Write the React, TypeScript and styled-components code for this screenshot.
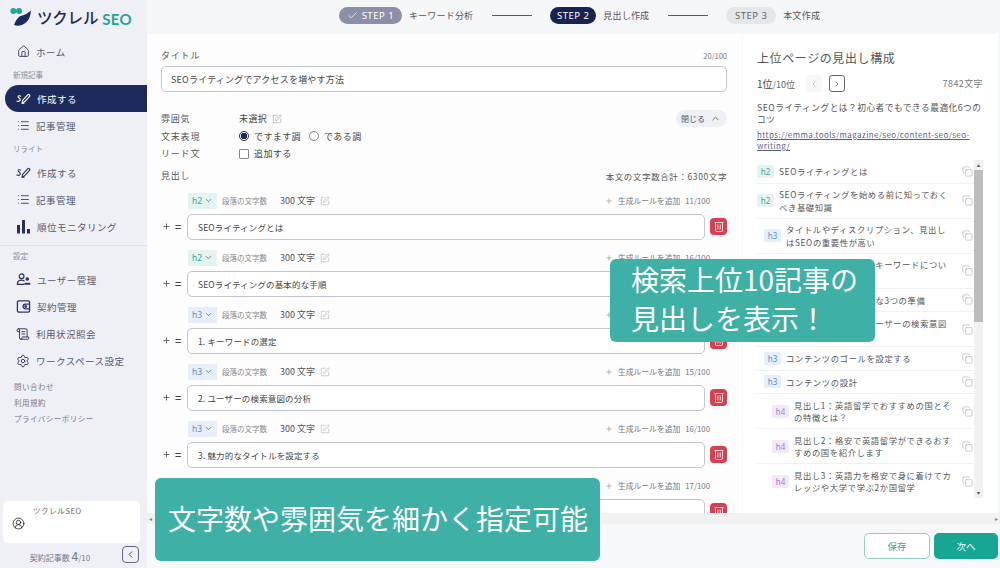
// Dependencies
import React from 'react'
import styled, { createGlobalStyle } from 'styled-components'
import {
  Check,
  ChevronDown,
  ChevronLeft,
  ChevronRight,
  ChevronUp,
  CircleUserRound,
  Copy,
  House,
  List,
  Plus,
  ScrollText,
  Settings,
  SquarePen,
} from 'lucide-react'

const jp = `"Noto Sans CJK JP", "Noto Sans", sans-serif`

// Icons
const PenSign = ({ light }: { light?: boolean }) => (
  <svg width="15" height="15" viewBox="0 0 16 16" fill="none" stroke={light ? '#fff' : '#2c3566'} strokeWidth="1.2" strokeLinecap="round" strokeLinejoin="round">
    <path d="M5 5.500c-1.500-1-3-.2-2.700.9.3 1 2.500 1.600 2.300 3-.2 1.300-2.300 2.200-3.600 1.400" />
    <path d="M6.500 13l.6-3 5.300-5.800c.6-.6 1.400-.6 1.900-.1s.5 1.300-.1 1.900l-5.300 5.800z" />
    <path d="M6.500 13h2" />
  </svg>
)

const Bars = () => (
  <svg width="15" height="15" viewBox="0 0 15 15" fill="#27305f">
    <rect x="1" y="6" width="3" height="8.500" />
    <rect x="6" y="1" width="3" height="13.500" />
    <rect x="11" y="10" width="3" height="4.500" />
  </svg>
)

const Users = () => (
  <svg width="15" height="15" viewBox="0 0 16 16" fill="none" stroke="#2c3566" strokeWidth="1.300" strokeLinecap="round">
    <circle cx="6" cy="4.500" r="2.500" />
    <path d="M1.500 13c0-2.800 2-4.300 4.500-4.300 1 0 1.900.2 2.600.7" />
    <path d="M1.500 13.300h7" />
    <circle cx="12" cy="7.500" r="1.300" fill="#2c3566" />
    <path d="M9.800 12.500h4.700" strokeWidth="2" />
  </svg>
)

const Wallet = () => (
  <svg width="15" height="15" viewBox="0 0 16 16" fill="none" stroke="#2c3566" strokeWidth="1.400">
    <rect x="1.500" y="2" width="13" height="12" rx="1.500" />
    <path d="M14.500 5.500H10a2.500 2.500 0 0 0 0 5h4.500" />
    <circle cx="10.300" cy="8" r=".8" />
  </svg>
)

const Trash = () => (
  <svg width="10" height="11" viewBox="0 0 10 11" fill="none" stroke="#fbdfe2" strokeWidth="1">
    <path d="M.5 1.500h9" />
    <rect x="1.500" y="1.500" width="7" height="9" rx=".8" />
    <path d="M3.800 3.500v5M6.200 3.500v5" />
  </svg>
)

const Logo = () => (
  <svg width="22" height="21" viewBox="0 0 22 21">
    <circle cx="3.300" cy="4" r="3" fill="#1fa795" />
    <circle cx="9" cy="4" r="3" fill="#1fa795" />
    <path d="M20.800 3.500C17 7.500 12 8.500 9.500 9.500 7.500 11 5.500 14 4 18c7 2.500 17-2.500 16.800-14.500z" fill="#1f2a5c" />
  </svg>
)

// Data
type Level = 'h2' | 'h3' | 'h4'

const headings: { level: Level; text: string; count: string }[] = [
  { level: 'h2', text: 'SEOライティングとは', count: '11/100' },
  { level: 'h2', text: 'SEOライティングの基本的な手順', count: '16/100' },
  { level: 'h3', text: '1. キーワードの選定', count: '10/100' },
  { level: 'h3', text: '2. ユーザーの検索意図の分析', count: '15/100' },
  { level: 'h3', text: '3. 魅力的なタイトルを設定する', count: '16/100' },
  { level: 'h3', text: '4. 見出し構成を作成する', count: '17/100' },
]

const outline: { level: Level; text: string }[] = [
  { level: 'h2', text: 'SEOライティングとは' },
  { level: 'h2', text: 'SEOライティングを始める前に知っておくべき基礎知識' },
  { level: 'h3', text: 'タイトルやディスクリプション、見出しはSEOの重要性が高い' },
  { level: 'h3', text: '今回ターゲットとするキーワードについて理解する' },
  { level: 'h3', text: '執筆を始める前に必要な3つの準備' },
  { level: 'h3', text: 'まずはキーワードとユーザーの検索意図を把握する' },
  { level: 'h3', text: 'コンテンツのゴールを設定する' },
  { level: 'h3', text: 'コンテンツの設計' },
  { level: 'h4', text: '見出し1：英語留学でおすすめの国とその特徴とは？' },
  { level: 'h4', text: '見出し2：格安で英語留学ができるおすすめの国を紹介します' },
  { level: 'h4', text: '見出し3：英語力を格安で身に着けてカレッジや大学で学ぶ2か国留学' },
]

// Page
export default function App() {
  return (
    <Page>
      <GlobalStyle />
      <Sidebar>
        <Brand>
          <Logo />
          <BrandName>ツクレル</BrandName>
          <BrandSeo>SEO</BrandSeo>
        </Brand>
        <NavItem><NavIcon><House size={13} strokeWidth={1.6} /></NavIcon>ホーム</NavItem>
        <NavLabel>新規記事</NavLabel>
        <NavItem $active><NavIcon><PenSign light /></NavIcon>作成する</NavItem>
        <NavItem><NavIcon><List size={13} strokeWidth={1.6} /></NavIcon>記事管理</NavItem>
        <NavLabel>リライト</NavLabel>
        <NavItem><NavIcon><PenSign /></NavIcon>作成する</NavItem>
        <NavItem><NavIcon><List size={13} strokeWidth={1.6} /></NavIcon>記事管理</NavItem>
        <NavItem><NavIcon><Bars /></NavIcon>順位モニタリング</NavItem>
        <NavRule />
        <NavLabel>設定</NavLabel>
        <NavItem><NavIcon><Users /></NavIcon>ユーザー管理</NavItem>
        <NavItem><NavIcon><Wallet /></NavIcon>契約管理</NavItem>
        <NavItem><NavIcon><ScrollText size={14} strokeWidth={1.6} /></NavIcon>利用状況照会</NavItem>
        <NavItem><NavIcon><Settings size={14} strokeWidth={1.6} /></NavIcon>ワークスペース設定</NavItem>
        <SmallLinks>
          <a>問い合わせ</a>
          <a>利用規約</a>
          <a>プライバシーポリシー</a>
        </SmallLinks>
        <Account>
          <CircleUserRound size={13} strokeWidth={1.5} color="#222" />
          <span>ツクレルSEO</span>
        </Account>
        <Quota>
          <span>契約記事数 <b>4</b>/10</span>
          <Collapse><ChevronLeft size={11} strokeWidth={2} /></Collapse>
        </Quota>
      </Sidebar>

      <Main>
        <Stepper>
          <StepPill $state="done"><Check size={11} strokeWidth={1.6} />STEP 1</StepPill>
          <StepName>キーワード分析</StepName>
          <StepLine />
          <StepPill $state="current">STEP 2</StepPill>
          <StepName>見出し作成</StepName>
          <StepLine />
          <StepPill $state="todo">STEP 3</StepPill>
          <StepName>本文作成</StepName>
        </Stepper>

        <Panels>
          <FormPanel>
            <SpreadRow>
              <FieldLabel>タイトル</FieldLabel>
              <Counter>20/100</Counter>
            </SpreadRow>
            <TitleInput>SEOライティングでアクセスを増やす方法</TitleInput>

            <Options>
              <OptionRow>
                <FieldLabel>雰囲気</FieldLabel>
                <OptionValue>未選択<SquarePen size={10} strokeWidth={1.2} color="#888" /></OptionValue>
                <CloseButton>閉じる<ChevronUp size={11} strokeWidth={1.8} /></CloseButton>
              </OptionRow>
              <OptionRow>
                <FieldLabel>文末表現</FieldLabel>
                <OptionValue>
                  <Radio $checked />ですます調
                  <Radio />である調
                </OptionValue>
              </OptionRow>
              <OptionRow>
                <FieldLabel>リード文</FieldLabel>
                <OptionValue><Box />追加する</OptionValue>
              </OptionRow>
            </Options>

            <HeadingBar>
              <FieldLabel>見出し</FieldLabel>
              <Total>本文の文字数合計：6300文字</Total>
            </HeadingBar>

            {headings.map((h, i) => (
              <HeadingItem key={i}>
                <HeadingMeta>
                  <LevelSelect $level={h.level}>{h.level}<ChevronDown size={9} strokeWidth={1.8} /></LevelSelect>
                  <MetaLabel>段落の文字数</MetaLabel>
                  <MetaValue>300 文字</MetaValue>
                  <SquarePen size={10} strokeWidth={1.2} color="#999" />
                  <RuleAdd><Plus size={8} strokeWidth={1.5} /><span>生成ルールを追加</span><span>{h.count}</span></RuleAdd>
                </HeadingMeta>
                <HeadingRow>
                  <Handles><Plus size={9} strokeWidth={2} /><b>=</b></Handles>
                  <HeadingInput>{h.text}</HeadingInput>
                  <TrashButton><Trash /></TrashButton>
                </HeadingRow>
              </HeadingItem>
            ))}
          </FormPanel>

          <SidePanel>
            <SideTitle>上位ページの見出し構成</SideTitle>
            <RankRow>
              <Rank>1位<small>/10位</small></Rank>
              <PageButton $disabled><ChevronLeft size={8} /></PageButton>
              <PageButton><ChevronRight size={8} /></PageButton>
              <CharCount>7842文字</CharCount>
            </RankRow>
            <ArticleTitle>SEOライティングとは？初心者でもできる最適化6つのコツ</ArticleTitle>
            <ArticleLink>https://emma.tools/magazine/seo/content-seo/seo-writing/</ArticleLink>
            <OutlineBox>
              <OutlineList>
                {outline.map((o, i) => (
                  <OutlineRow key={i} $level={o.level}>
                    <LevelTag $level={o.level}>{o.level}</LevelTag>
                    <OutlineText>{o.text}</OutlineText>
                    <Copy size={11} strokeWidth={1.1} color="#999" />
                  </OutlineRow>
                ))}
              </OutlineList>
              <OutlineScroll>
                <Arrow>▴</Arrow>
                <Thumb />
                <Arrow>▾</Arrow>
              </OutlineScroll>
            </OutlineBox>
          </SidePanel>
        </Panels>

        <HScroll>
          <span>◂</span>
          <span>▸</span>
        </HScroll>

        <Footer>
          <SaveButton>保存</SaveButton>
          <NextButton>次へ</NextButton>
        </Footer>
      </Main>

      <Callout $kind="top">検索上位10記事の<br />見出しを表示！</Callout>
      <Callout $kind="bottom">文字数や雰囲気を細かく指定可能</Callout>
    </Page>
  )
}

// Styled Components
const GlobalStyle = createGlobalStyle`
  html, body, #root {
    margin: 0;
    height: 100%;
  }

  body {
    overflow: hidden;
    font-family: ${jp};
    color: #444;
  }

  * {
    box-sizing: border-box;
  }
`

const Page = styled.div`
  position: relative;
  display: flex;
  width: 1000px;
  height: 568px;
  overflow: hidden;
  background: #f5f6f8;
`

const Sidebar = styled.aside`
  display: flex;
  flex: 0 0 147px;
  flex-direction: column;
  background: #eef0f6;
`

const Brand = styled.div`
  display: flex;
  align-items: center;
  height: 38px;
  padding: 0 0 4px 10px;
`

const BrandName = styled.span`
  margin-left: 5px;
  color: #1f2a5c;
  font-size: 15.500px;
  font-weight: 500;
  letter-spacing: -0.2px;
`

const BrandSeo = styled.span`
  margin: 3px 0 0 4px;
  color: #1fa795;
  font-family: Lato, sans-serif;
  font-size: 15px;
  font-weight: 700;
  letter-spacing: 0.4px;
`

const NavItem = styled.div<{ $active?: boolean }>`
  display: flex;
  align-items: center;
  height: 27px;
  margin-left: 5px;
  padding-left: 11px;
  border-radius: 14px 0 0 14px;
  background: ${(p) => (p.$active ? '#1d2a5b' : 'transparent')};
  color: ${(p) => (p.$active ? '#fff' : '#555a6e')};
  font-size: 9.500px;
  letter-spacing: 0.5px;
`

const NavIcon = styled.span`
  display: flex;
  flex: 0 0 14px;
  justify-content: center;
  margin-right: 6px;
  color: #2c3566;

  svg {
    flex: none;
  }
`

const NavLabel = styled.div`
  height: 13px;
  margin: 3px 0 4px 13px;
  color: #8b8e9a;
  font-size: 7.500px;
  line-height: 13px;
`

const NavRule = styled.div`
  height: 1px;
  margin-top: 5px;
  background: #dcdee6;
`

const SmallLinks = styled.div`
  display: flex;
  flex-direction: column;
  margin: 5px 0 0 14px;
  color: #777a88;
  font-size: 7.500px;
  line-height: 16px;
  letter-spacing: 0.5px;
`

const Account = styled.div`
  display: flex;
  gap: 8px;
  height: 42px;
  margin: auto 7px 0 3px;
  padding: 4px 0 0 9px;
  border-radius: 5px;
  background: #fff;
  color: #666;
  font-size: 7.500px;
  letter-spacing: 0.6px;

  svg {
    margin-top: 12px;
  }

  span {
    line-height: 12px;
  }
`

const Quota = styled.div`
  position: relative;
  display: flex;
  align-items: center;
  justify-content: center;
  height: 25px;
  padding-right: 27px;
  padding-bottom: 1px;
  color: #777a88;
  font-size: 8px;

  b {
    font-size: 12px;
    font-weight: 400;
  }
`

const Collapse = styled.div`
  position: absolute;
  top: 3px;
  right: 8px;
  display: flex;
  align-items: center;
  justify-content: center;
  width: 17px;
  height: 17px;
  border: 1px solid #62667e;
  border-radius: 4px;
  color: #3a3f5c;
`

const Main = styled.main`
  display: flex;
  flex: 1;
  flex-direction: column;
  min-width: 0;
`

const Stepper = styled.nav`
  display: flex;
  flex: 0 0 34px;
  align-items: center;
  justify-content: center;
  padding: 0 0 3px 12px;
  font-size: 9px;
`

const stepWidths = { done: 63, current: 46, todo: 50 }

const StepPill = styled.div<{ $state: 'done' | 'current' | 'todo' }>`
  display: flex;
  align-items: center;
  justify-content: center;
  gap: 4px;
  width: ${(p) => stepWidths[p.$state]}px;
  height: 17px;
  border-radius: 9px;
  background: ${(p) => ({ done: '#8a90a8', current: '#17244f', todo: '#e4e6ec' }[p.$state])};
  color: ${(p) => (p.$state === 'todo' ? '#666' : '#fff')};
  font-family: "Noto Sans", sans-serif;
  font-size: 9.500px;
  letter-spacing: 0.5px;
`

const StepName = styled.span`
  margin-left: 7px;
  color: #555;
  font-size: 9px;
  letter-spacing: 0.200px;
`

const StepLine = styled.i`
  width: 40px;
  height: 1px;
  margin: 0 18px 0 19px;
  background: #555a70;
`

const Panels = styled.div`
  display: flex;
  flex: 0 0 479px;
  overflow: hidden;
  padding-right: 2px;
`

const FormPanel = styled.section`
  flex: 0 0 595px;
  padding: 15px 15px 0 14px;
  overflow: hidden;
  background: #fdfdfe;
`

const SpreadRow = styled.div`
  display: flex;
  align-items: center;
  justify-content: space-between;
  height: 13px;
`

const FieldLabel = styled.span`
  flex: 0 0 78px;
  color: #555;
  font-size: 9px;
  letter-spacing: 0.8px;
`

const Counter = styled.span`
  color: #777;
  font-size: 7.500px;
`

const inputBox = `
  display: flex;
  align-items: center;
  border: 1px solid #c3c5cc;
  border-radius: 5px;
  background: #fff;
  color: #444;
`

const TitleInput = styled.div`
  ${inputBox}
  height: 26px;
  margin-top: 4px;
  padding-left: 9px;
  font-size: 9px;
  letter-spacing: 0.200px;
`

const Options = styled.div`
  margin-top: 18px;
`

const OptionRow = styled.div`
  position: relative;
  display: flex;
  align-items: center;
  height: 17.500px;
`

const OptionValue = styled.div`
  display: flex;
  align-items: center;
  gap: 5px;
  color: #444;
  font-size: 9px;
  letter-spacing: 0.400px;
`

const Radio = styled.i<{ $checked?: boolean }>`
  display: block;
  width: 10px;
  height: 10px;
  border: 1px solid ${(p) => (p.$checked ? '#1d2a5b' : '#888')};
  border-radius: 50%;
  background: ${(p) => (p.$checked ? 'radial-gradient(circle, #1d2a5b 0 3px, #fff 3.500px)' : '#fff')};

  &:not(:first-child) {
    margin-left: 3px;
  }
`

const Box = styled.i`
  display: block;
  width: 10px;
  height: 10px;
  border: 1px solid #888;
  border-radius: 1px;
  background: #fff;
`

const CloseButton = styled.div`
  position: absolute;
  top: 0;
  right: 0;
  display: flex;
  align-items: center;
  gap: 5px;
  height: 17px;
  padding: 0 6px 0 5px;
  border-radius: 9px;
  background: #eef0f6;
  color: #555;
  font-size: 8px;
`

const HeadingBar = styled.div`
  display: flex;
  align-items: center;
  justify-content: space-between;
  height: 14px;
  margin-top: 6px;
`

const Total = styled.span`
  color: #555;
  font-size: 8.500px;
  letter-spacing: 0.600px;
`

const HeadingItem = styled.div`
  margin-top: 10px;
`

const HeadingMeta = styled.div`
  display: flex;
  align-items: center;
  gap: 5px;
  height: 16px;
  padding: 0 17px 0 27px;
`

const levelColors = {
  h2: { bg: '#e3f3f1', fg: '#3aa596' },
  h3: { bg: '#e6eefa', fg: '#5b8fc9' },
  h4: { bg: '#f1e8f9', fg: '#a678d6' },
}

const LevelSelect = styled.div<{ $level: Level }>`
  display: flex;
  align-items: center;
  justify-content: space-between;
  width: 29px;
  height: 16px;
  padding: 0 4px;
  background: ${(p) => levelColors[p.$level].bg};
  color: ${(p) => levelColors[p.$level].fg};
  font-family: "Noto Sans", sans-serif;
  font-size: 8.500px;

  svg {
    color: #555;
  }
`

const MetaLabel = styled.span`
  color: #888;
  font-size: 7.500px;
`

const MetaValue = styled.span`
  margin: 0 0 0 8px;
  color: #555;
  font-size: 9px;
`

const RuleAdd = styled.div`
  display: flex;
  align-items: center;
  gap: 5px;
  margin-left: auto;
  color: #777;
  font-size: 7.800px;
`

const HeadingRow = styled.div`
  display: flex;
  align-items: center;
  height: 26px;
  margin-top: 5px;
`

const Handles = styled.div`
  display: flex;
  flex: 0 0 26px;
  align-items: center;
  gap: 2px;
  padding-left: 1px;
  color: #444;

  b {
    font-size: 11px;
    font-weight: 500;
    line-height: 1;
    margin-left: 2px;
  }
`

const HeadingInput = styled.div`
  ${inputBox}
  flex: 1;
  height: 26px;
  padding-left: 10px;
  font-size: 8.500px;
  letter-spacing: 0.150px;
`

const TrashButton = styled.div`
  display: flex;
  flex: 0 0 17px;
  align-items: center;
  justify-content: center;
  height: 17px;
  margin-left: 5px;
  border-radius: 4px;
  background: #d9404f;
`

const SidePanel = styled.section`
  flex: 1;
  margin-left: 1px;
  padding: 15px 15px 0 14px;
  overflow: hidden;
  background: #fff;
`

const SideTitle = styled.h2`
  margin: 0;
  color: #555;
  font-size: 12px;
  font-weight: 400;
  line-height: 17px;
  letter-spacing: 0.600px;
`

const RankRow = styled.div`
  display: flex;
  align-items: center;
  height: 17px;
  margin-top: 9px;
`

const Rank = styled.span`
  width: 49px;
  color: #444;
  font-size: 10px;

  small {
    color: #666;
    font-size: 9px;
  }
`

const PageButton = styled.div<{ $disabled?: boolean }>`
  display: flex;
  align-items: center;
  justify-content: center;
  width: 16px;
  height: 17px;
  margin-right: 7px;
  border: 1px solid ${(p) => (p.$disabled ? 'transparent' : '#666')};
  border-radius: 3px;
  background: ${(p) => (p.$disabled ? '#f6f7f9' : '#fff')};
  color: ${(p) => (p.$disabled ? '#aaa' : '#444')};
`

const CharCount = styled.span`
  margin-left: auto;
  color: #777;
  font-size: 9px;
  letter-spacing: 0.400px;
`

const ArticleTitle = styled.p`
  margin: 10px 0 0;
  color: #555;
  font-size: 8.700px;
  line-height: 12px;
  letter-spacing: 0.500px;
`

const ArticleLink = styled.a`
  display: block;
  margin-top: 3px;
  color: #5a5f85;
  font-size: 8px;
  line-height: 11px;
  letter-spacing: 0.400px;
  text-decoration: underline;
`

const OutlineBox = styled.div`
  display: flex;
  height: 338px;
  margin-top: 9px;
`

const OutlineList = styled.div`
  flex: 1;
  min-width: 0;
  overflow: hidden;
`

const outlineIndent = { h2: 0, h3: 7, h4: 15 }

const OutlineRow = styled.div<{ $level: Level }>`
  display: flex;
  align-items: center;
  gap: 5px;
  min-height: 23.500px;
  padding: 4.500px 1px 4.500px ${(p) => outlineIndent[p.$level]}px;
  border-bottom: 1px solid #eff0f2;

  svg {
    flex: none;
    margin-left: auto;
  }
`

const LevelTag = styled.span<{ $level: Level }>`
  flex: none;
  width: 17px;
  height: 13px;
  border-radius: 2px;
  background: ${(p) => levelColors[p.$level].bg};
  color: ${(p) => levelColors[p.$level].fg};
  font-family: "Noto Sans", sans-serif;
  font-size: 8px;
  line-height: 13px;
  text-align: center;
`

const OutlineText = styled.span`
  flex: 1;
  color: #555;
  font-size: 8.300px;
  line-height: 12.500px;
  letter-spacing: 0.650px;
  padding-right: 3.500px;
`

const OutlineScroll = styled.div`
  display: flex;
  flex: 0 0 9px;
  flex-direction: column;
  align-items: center;
  background: #f1f1f1;
`

const Arrow = styled.span`
  height: 10px;
  color: #555;
  font-size: 6px;
  line-height: 10px;

  &:last-child {
    margin-top: auto;
  }
`

const Thumb = styled.div`
  width: 100%;
  height: 152px;
  background: #bdbdbd;
`

const HScroll = styled.div`
  display: flex;
  flex: 0 0 11px;
  align-items: center;
  justify-content: space-between;
  padding: 0 2px;
  background: #f1f1f1;
  color: #888;
  font-size: 6px;
`

const Footer = styled.footer`
  display: flex;
  flex: 1;
  align-items: center;
  justify-content: flex-end;
  gap: 4px;
  padding-right: 2px;
  background: #f6f8f9;
`

const SaveButton = styled.div`
  display: flex;
  align-items: center;
  justify-content: center;
  width: 66px;
  height: 26px;
  border: 1px solid #8fd0c6;
  border-radius: 5px;
  background: #fff;
  color: #3aa596;
  font-size: 9.500px;
`

const NextButton = styled.div`
  display: flex;
  align-items: center;
  justify-content: center;
  width: 64px;
  height: 26px;
  border-radius: 5px;
  background: #17a594;
  color: #fff;
  font-size: 9.500px;
`

const Callout = styled.div<{ $kind: 'top' | 'bottom' }>`
  position: absolute;
  top: ${(p) => (p.$kind === 'top' ? '259px' : '478px')};
  left: ${(p) => (p.$kind === 'top' ? '610px' : '155px')};
  display: flex;
  align-items: center;
  width: ${(p) => (p.$kind === 'top' ? '265px' : '445px')};
  height: 83px;
  padding: 0 0 3px ${(p) => (p.$kind === 'top' ? '21px' : '13px')};
  border-radius: 6px;
  background: #3eb0a5;
  color: #fff;
  font-family: "Noto Sans CJK JP", sans-serif;
  font-size: 28px;
  font-weight: 400;
  line-height: 39px;
  white-space: nowrap;
`
